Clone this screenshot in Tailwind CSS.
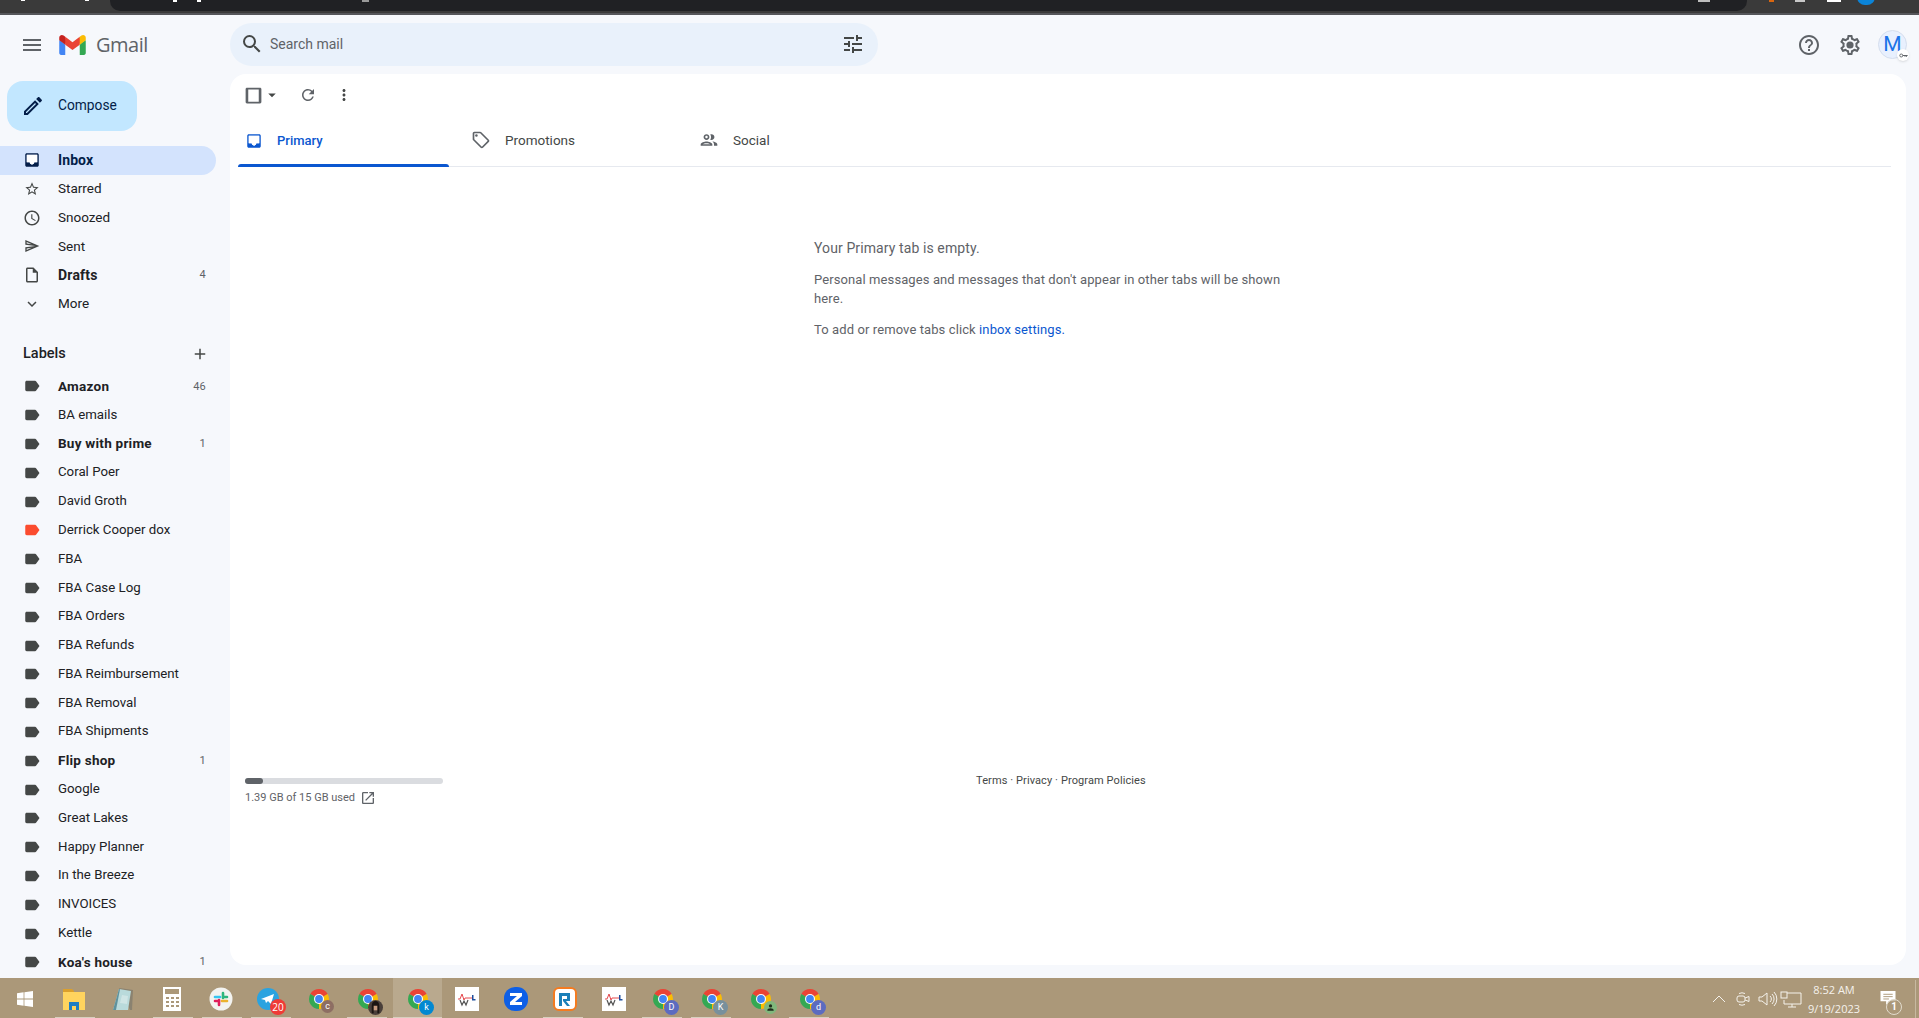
<!DOCTYPE html>
<html lang="en">
  <head>
    <meta charset="UTF-8" />
    <meta name="viewport" content="width=device-width, initial-scale=1.0" />
    <title>Inbox - Gmail</title>
    <script src="https://cdn.jsdelivr.net/npm/@tailwindcss/browser@4"></script>
  </head>
  <body class="bg-[#f6f8fc] h-screen overflow-hidden flex flex-col font-['Roboto',sans-serif] text-[#202124]">
    <svg class="hidden">
      <symbol id="label" viewBox="0 0 24 24"><path d="M17.63 5.84C17.27 5.33 16.67 5 16 5L5 5.01C3.9 5.01 3 5.9 3 7v10c0 1.1.9 1.99 2 1.99L16 19c.67 0 1.27-.33 1.63-.84L22 12l-4.37-6.16z" /></symbol>
      <symbol id="chrome" viewBox="0 0 48 48">
        <path fill="#ea4335" d="M6.68 14A20 20 0 0 1 41.32 14L24 24Z" />
        <path fill="#fbbc04" d="M41.32 14A20 20 0 0 1 24 44L24 24Z" />
        <path fill="#34a853" d="M24 44A20 20 0 0 1 6.68 14L24 24Z" />
        <circle cx="24" cy="24" r="10" fill="#fff" />
        <circle cx="24" cy="24" r="7.8" fill="#4285f4" />
      </symbol>
      <symbol id="inbox" viewBox="0 0 24 24"><path d="M19 3H5c-1.1 0-2 .9-2 2v14c0 1.1.9 2 2 2h14c1.1 0 2-.9 2-2V5c0-1.1-.9-2-2-2zm0 12h-4c0 1.66-1.35 3-3 3s-3-1.34-3-3H5V5h14v10z" /><path fill="#fff" d="M5 5h14v10h-4c0 1.66-1.35 3-3 3s-3-1.34-3-3H5z" /></symbol>
      <symbol id="doc" viewBox="0 0 24 24">
        <path fill="#fff" d="M0 0h24v24H0z" />
        <path fill="none" stroke="#e5484d" stroke-width="1" d="M3 12l2 0 2-5 2 6 1-2h7" />
        <path fill="none" stroke="#555" stroke-width="1.2" d="M5 13l2 5 2-4 2 4 2-5" />
        <path fill="#1f4e9c" d="M17 8h1.5v4h2v1.5H17z" />
      </symbol>
    </svg>

    <!-- browser chrome, cut off at the top of the capture -->
    <div class="relative h-[15px] shrink-0 bg-[#3a3a3a] border-b-2 border-[#55565a] overflow-hidden">
      <div class="ml-[110px] w-[1637px] h-[11px] bg-[#202124] rounded-b-[10px]"></div>
      <span class="absolute top-0 left-[21px] w-[4px] h-[1px] bg-white"></span>
      <span class="absolute top-0 left-[85px] w-[4px] h-[1px] bg-white"></span>
      <span class="absolute top-0 left-[173px] w-[4px] h-[2px] bg-white"></span>
      <span class="absolute top-0 left-[197px] w-[4px] h-[2px] bg-white"></span>
      <span class="absolute top-0 left-[362px] w-[7px] h-[2px] bg-[#9a9a9a]"></span>
      <span class="absolute top-0 left-[1698px] w-[12px] h-[2px] bg-[#bdbdbd]"></span>
      <span class="absolute top-0 left-[1769px] w-[5px] h-[2px] bg-[#d9660f]"></span>
      <span class="absolute top-0 left-[1795px] w-[10px] h-[2px] bg-[#c8c8c8]"></span>
      <span class="absolute top-0 left-[1827px] w-[14px] h-[2px] bg-white"></span>
      <span class="absolute top-[-11px] left-[1857px] w-[18px] h-[16px] rounded-full bg-[#0b84d8]"></span>
    </div>

    <!-- gmail header -->
    <header class="h-[59px] shrink-0 flex items-center">
      <div class="w-[230px] flex items-center shrink-0">
        <svg class="ml-5 w-6 h-6 fill-[#5f6368]" viewBox="0 0 24 24"><path d="M3 18h18v-2H3v2zm0-5h18v-2H3v2zm0-7v2h18V6H3z" /></svg>
        <svg class="ml-[15px] w-[27px] h-[20px]" viewBox="0 0 256 193">
          <path fill="#4285F4" d="M58.182 192.05V93.14L27.507 65.077 0 49.504v125.091c0 9.658 7.825 17.455 17.455 17.455h40.727Z" />
          <path fill="#34A853" d="M197.818 192.05h40.727c9.659 0 17.455-7.826 17.455-17.455V49.505l-31.156 17.837-27.026 25.798v98.91Z" />
          <path fill="#EA4335" d="m58.182 93.14-4.174-38.647 4.174-36.989L128 69.868l69.818-52.364 4.669 34.992-4.669 40.644L128 145.504z" />
          <path fill="#FBBC04" d="M197.818 17.504V93.14L256 49.504V26.231c0-21.585-24.64-33.89-41.89-20.945l-16.292 12.218Z" />
          <path fill="#C5221F" d="M0 49.504l26.759 20.07L58.182 93.14V17.504L41.89 5.286C24.61-7.66 0 4.646 0 26.23v23.273Z" />
        </svg>
        <span class="ml-[10px] text-[20px] leading-none text-[#5f6368] font-['Open_Sans',sans-serif] tracking-[-0.5px]">Gmail</span>
      </div>
      <div class="w-[648px] h-[43px] mb-[1px] rounded-[22px] bg-[#e9f1fb] flex items-center">
        <svg class="ml-[10px] w-6 h-6 fill-[#444746]" viewBox="0 0 24 24"><path d="M15.5 14h-.79l-.28-.27A6.471 6.471 0 0 0 16 9.5 6.5 6.5 0 1 0 9.5 16c1.61 0 3.09-.59 4.23-1.57l.27.28v.79l5 4.99L20.49 19l-4.99-5zm-6 0C7.01 14 5 11.99 5 9.5S7.01 5 9.5 5 14 7.01 14 9.5 11.99 14 9.5 14z" /></svg>
        <span class="ml-[6px] text-sm text-[#5f6368]">Search mail</span>
        <svg class="ml-auto mr-[13px] w-6 h-6 fill-[#444746]" viewBox="0 0 24 24"><path d="M3 17v2h6v-2H3zM3 5v2h10V5H3zm10 16v-2h8v-2h-8v-2h-2v6h2zM7 9v2H3v2h4v2h2V9H7zm14 4v-2H11v2h10zm-6-4h2V7h4V5h-4V3h-2v6z" /></svg>
      </div>
      <div class="ml-auto flex items-center">
        <svg class="w-6 h-6 fill-[#5f6368]" viewBox="0 0 24 24"><path d="M11 18h2v-2h-2v2zm1-16C6.48 2 2 6.48 2 12s4.48 10 10 10 10-4.48 10-10S17.52 2 12 2zm0 18c-4.41 0-8-3.59-8-8s3.59-8 8-8 8 3.59 8 8-3.59 8-8 8zm0-14c-2.21 0-4 1.79-4 4h2c0-1.1.9-2 2-2s2 .9 2 2c0 2-3 1.75-3 5h2c0-2.25 3-2.5 3-5 0-2.21-1.79-4-4-4z" /></svg>
        <svg class="ml-[17px] w-6 h-6 fill-[#5f6368]" viewBox="0 0 24 24"><path d="M19.43 12.98c.04-.32.07-.64.07-.98 0-.34-.03-.66-.07-.98l2.11-1.65c.19-.15.24-.42.12-.64l-2-3.46a.5.5 0 0 0-.61-.22l-2.49 1c-.52-.4-1.08-.73-1.69-.98l-.38-2.65A.488.488 0 0 0 14 2h-4c-.25 0-.46.18-.49.42l-.38 2.65c-.61.25-1.17.59-1.69.98l-2.49-1a.566.566 0 0 0-.18-.03c-.17 0-.34.09-.43.25l-2 3.46c-.13.22-.07.49.12.64l2.11 1.65c-.04.32-.07.65-.07.98 0 .33.03.66.07.98l-2.11 1.65c-.19.15-.24.42-.12.64l2 3.46a.5.5 0 0 0 .61.22l2.49-1c.52.4 1.08.73 1.69.98l.38 2.65c.03.24.24.42.49.42h4c.25 0 .46-.18.49-.42l.38-2.65c.61-.25 1.17-.59 1.69-.98l2.49 1c.06.02.12.03.18.03.17 0 .34-.09.43-.25l2-3.46c.12-.22.07-.49-.12-.64l-2.11-1.65zm-1.98-1.71c.04.31.05.52.05.73 0 .21-.02.43-.05.73l-.14 1.13.89.7 1.08.84-.7 1.21-1.27-.51-1.04-.42-.9.68c-.43.32-.84.56-1.25.73l-1.06.43-.16 1.13-.2 1.35h-1.4l-.19-1.35-.16-1.13-1.06-.43c-.43-.18-.83-.41-1.23-.71l-.91-.7-1.06.43-1.27.51-.7-1.21 1.08-.84.89-.7-.14-1.13c-.03-.31-.05-.54-.05-.74s.02-.43.05-.73l.14-1.13-.89-.7-1.08-.84.7-1.21 1.27.51 1.04.42.9-.68c.43-.32.84-.56 1.25-.73l1.06-.43.16-1.13.2-1.35h1.39l.19 1.35.16 1.13 1.06.43c.43.18.83.41 1.23.71l.91.7 1.06-.43 1.27-.51.7 1.21-1.07.85-.89.7.14 1.13z" /><circle cx="12" cy="12" r="3.6" /></svg>
        <div class="relative ml-[16px] mr-[12px] w-[29px] h-[29px] rounded-full bg-[#e8f0fe] border border-[#d5deee] flex items-center justify-center text-[21px] leading-none text-[#1a73e8]">
          M
          <span class="absolute right-[-3px] bottom-[-3px] w-[12px] h-[12px] rounded-full bg-white shadow-sm flex items-center justify-center">
            <svg class="w-[9px] h-[9px]" viewBox="0 0 12 12"><circle cx="3" cy="6" r="2" fill="none" stroke="#5f6368" stroke-width="1.2" /><path fill="#5f6368" d="M5 5.4h6.5v1.2h-1v1.4h-1V6.6h-1V8h-1V6.6H5z" /></svg>
          </span>
        </div>
      </div>
    </header>

    <div class="flex-1 min-h-0 flex">
      <!-- left nav -->
      <aside class="w-[230px] shrink-0 overflow-hidden pt-[7px] text-sm">
        <button class="ml-[7px] mb-[15px] w-[130px] h-[50px] rounded-2xl bg-[#c2e7ff] flex items-center">
          <svg class="ml-[14px] w-6 h-6 fill-[#041e49]" viewBox="0 0 24 24"><path d="M3 17.25V21h3.75L17.81 9.94l-3.75-3.75L3 17.25zM5.92 19H5v-.92l9.06-9.06.92.92L5.92 19zM20.71 5.63l-2.34-2.34c-.2-.2-.45-.29-.71-.29s-.51.1-.7.29l-1.83 1.83 3.75 3.75 1.83-1.83c.39-.39.39-1.02 0-1.41z" /></svg>
          <span class="ml-[13px] text-[13.75px] text-[#041e49]">Compose</span>
        </button>

        <nav class="flex flex-col">
          <div class="h-[29px] pb-[1px] w-[216px] rounded-r-full bg-[#d3e3fd] flex items-center font-bold tracking-[0.1px] text-[#041e49]">
            <svg class="ml-[23px] w-[18px] h-[18px] fill-[#041e49]"><use href="#inbox" /></svg><span class="ml-[17px]">Inbox</span>
          </div>
          <div class="h-[28.8px] pb-[1px] flex items-center">
            <svg class="ml-[24px] w-4 h-4 fill-[#444746]" viewBox="0 0 24 24"><path d="M22 9.24l-7.19-.62L12 2 9.19 8.63 2 9.24l5.46 4.73L5.82 21 12 17.27 18.18 21l-1.63-7.03L22 9.24zM12 15.4l-3.76 2.27 1-4.28-3.32-2.88 4.38-.38L12 6.1l1.71 4.04 4.38.38-3.32 2.88 1 4.28L12 15.4z" /></svg><span class="ml-[18px] text-[13.5px]">Starred</span>
          </div>
          <div class="h-[28.8px] pb-[1px] flex items-center">
            <svg class="ml-[23px] w-[18px] h-[18px] fill-[#444746]" viewBox="0 0 24 24"><path d="M11.99 2C6.47 2 2 6.48 2 12s4.47 10 9.99 10C17.52 22 22 17.52 22 12S17.52 2 11.99 2zM12 20c-4.42 0-8-3.58-8-8s3.58-8 8-8 8 3.58 8 8-3.58 8-8 8zm.5-13H11v6l5.25 3.15.75-1.23-4.5-2.67z" /></svg><span class="ml-[17px] text-[13.5px]">Snoozed</span>
          </div>
          <div class="h-[28.8px] pb-[1px] flex items-center">
            <svg class="ml-[24px] w-4 h-4 fill-[#444746]" viewBox="0 0 24 24"><path d="M4.01 6.03l7.51 3.22-7.52-1 .01-2.22m7.5 8.72L4 17.97v-2.22l7.51-1M2.01 3L2 10l15 2-15 2 .01 7L23 12 2.01 3z" /></svg><span class="ml-[18px] text-[13.5px]">Sent</span>
          </div>
          <div class="h-[28.8px] pb-[1px] w-[216px] flex items-center font-bold tracking-[0.2px]">
            <svg class="ml-[23px] w-[18px] h-[18px] fill-[#444746]" viewBox="0 0 24 24"><path d="M14 2H6c-1.1 0-1.99.9-1.99 2L4 20c0 1.1.89 2 1.99 2H18c1.1 0 2-.9 2-2V8l-6-6zM6 20V4h7v5h5v11H6z" /></svg><span class="ml-[17px]">Drafts</span><span class="ml-auto mr-[10px] text-[11px] font-normal text-[#5f6368]">4</span>
          </div>
          <div class="h-[28.8px] pb-[1px] flex items-center">
            <svg class="ml-[23px] w-[18px] h-[18px] fill-[#444746]" viewBox="0 0 24 24"><path d="M16.59 8.59L12 13.17 7.41 8.59 6 10l6 6 6-6z" /></svg><span class="ml-[17px] text-[13.5px]">More</span>
          </div>
        </nav>

        <div class="pt-[17px] h-[53.5px] w-[216px] flex items-center justify-between pl-[23px] pr-[7px] font-medium text-[14.5px]">
          <span>Labels</span>
          <svg class="w-[18px] h-[18px] fill-[#444746]" viewBox="0 0 24 24"><path d="M19 13h-6v6h-2v-6H5v-2h6V5h2v6h6v2z" /></svg>
        </div>

        <div class="flex flex-col w-[216px] text-[13.25px]">
          <div class="h-[28.8px] pb-[1px] flex items-center font-bold text-[13.5px] tracking-[0.25px]"><svg class="ml-[23px] w-[18px] h-[18px] fill-[#444746]"><use href="#label" /></svg><span class="ml-[17px]">Amazon</span><span class="ml-auto mr-[10px] text-[11px] font-normal text-[#5f6368]">46</span></div>
          <div class="h-[28.8px] pb-[1px] flex items-center"><svg class="ml-[23px] w-[18px] h-[18px] fill-[#444746]"><use href="#label" /></svg><span class="ml-[17px]">BA emails</span></div>
          <div class="h-[28.8px] pb-[1px] flex items-center font-bold text-[13.5px] tracking-[0.25px]"><svg class="ml-[23px] w-[18px] h-[18px] fill-[#444746]"><use href="#label" /></svg><span class="ml-[17px]">Buy with prime</span><span class="ml-auto mr-[10px] text-[11px] font-normal text-[#5f6368]">1</span></div>
          <div class="h-[28.8px] pb-[1px] flex items-center"><svg class="ml-[23px] w-[18px] h-[18px] fill-[#444746]"><use href="#label" /></svg><span class="ml-[17px]">Coral Poer</span></div>
          <div class="h-[28.8px] pb-[1px] flex items-center"><svg class="ml-[23px] w-[18px] h-[18px] fill-[#444746]"><use href="#label" /></svg><span class="ml-[17px]">David Groth</span></div>
          <div class="h-[28.8px] pb-[1px] flex items-center"><svg class="ml-[23px] w-[18px] h-[18px] fill-[#fb4c2f]"><use href="#label" /></svg><span class="ml-[17px]">Derrick Cooper dox</span></div>
          <div class="h-[28.8px] pb-[1px] flex items-center"><svg class="ml-[23px] w-[18px] h-[18px] fill-[#444746]"><use href="#label" /></svg><span class="ml-[17px]">FBA</span></div>
          <div class="h-[28.8px] pb-[1px] flex items-center"><svg class="ml-[23px] w-[18px] h-[18px] fill-[#444746]"><use href="#label" /></svg><span class="ml-[17px]">FBA Case Log</span></div>
          <div class="h-[28.8px] pb-[1px] flex items-center"><svg class="ml-[23px] w-[18px] h-[18px] fill-[#444746]"><use href="#label" /></svg><span class="ml-[17px]">FBA Orders</span></div>
          <div class="h-[28.8px] pb-[1px] flex items-center"><svg class="ml-[23px] w-[18px] h-[18px] fill-[#444746]"><use href="#label" /></svg><span class="ml-[17px]">FBA Refunds</span></div>
          <div class="h-[28.8px] pb-[1px] flex items-center"><svg class="ml-[23px] w-[18px] h-[18px] fill-[#444746]"><use href="#label" /></svg><span class="ml-[17px]">FBA Reimbursement</span></div>
          <div class="h-[28.8px] pb-[1px] flex items-center"><svg class="ml-[23px] w-[18px] h-[18px] fill-[#444746]"><use href="#label" /></svg><span class="ml-[17px]">FBA Removal</span></div>
          <div class="h-[28.8px] pb-[1px] flex items-center"><svg class="ml-[23px] w-[18px] h-[18px] fill-[#444746]"><use href="#label" /></svg><span class="ml-[17px]">FBA Shipments</span></div>
          <div class="h-[28.8px] pb-[1px] flex items-center font-bold text-[13.5px] tracking-[0.25px]"><svg class="ml-[23px] w-[18px] h-[18px] fill-[#444746]"><use href="#label" /></svg><span class="ml-[17px]">Flip shop</span><span class="ml-auto mr-[10px] text-[11px] font-normal text-[#5f6368]">1</span></div>
          <div class="h-[28.8px] pb-[1px] flex items-center"><svg class="ml-[23px] w-[18px] h-[18px] fill-[#444746]"><use href="#label" /></svg><span class="ml-[17px]">Google</span></div>
          <div class="h-[28.8px] pb-[1px] flex items-center"><svg class="ml-[23px] w-[18px] h-[18px] fill-[#444746]"><use href="#label" /></svg><span class="ml-[17px]">Great Lakes</span></div>
          <div class="h-[28.8px] pb-[1px] flex items-center"><svg class="ml-[23px] w-[18px] h-[18px] fill-[#444746]"><use href="#label" /></svg><span class="ml-[17px]">Happy Planner</span></div>
          <div class="h-[28.8px] pb-[1px] flex items-center"><svg class="ml-[23px] w-[18px] h-[18px] fill-[#444746]"><use href="#label" /></svg><span class="ml-[17px]">In the Breeze</span></div>
          <div class="h-[28.8px] pb-[1px] flex items-center"><svg class="ml-[23px] w-[18px] h-[18px] fill-[#444746]"><use href="#label" /></svg><span class="ml-[17px]">INVOICES</span></div>
          <div class="h-[28.8px] pb-[1px] flex items-center"><svg class="ml-[23px] w-[18px] h-[18px] fill-[#444746]"><use href="#label" /></svg><span class="ml-[17px]">Kettle</span></div>
          <div class="h-[28.8px] pb-[1px] flex items-center font-bold text-[13.5px] tracking-[0.25px]"><svg class="ml-[23px] w-[18px] h-[18px] fill-[#444746]"><use href="#label" /></svg><span class="ml-[17px]">Koa's house</span><span class="ml-auto mr-[10px] text-[11px] font-normal text-[#5f6368]">1</span></div>
        </div>
      </aside>

      <!-- message pane -->
      <main class="flex-1 min-w-0 mr-[13px] mb-[13px] bg-white rounded-2xl flex flex-col">
        <div class="h-[42px] pl-[13px] flex items-center shrink-0">
          <svg class="w-[21px] h-[21px] fill-[#5f6368]" viewBox="0 0 24 24"><path d="M18 5v14H6V5h12m1.5-2h-15C3.7 3 3 3.7 3 4.5v15c0 .8.7 1.5 1.5 1.5h15c.8 0 1.5-.7 1.5-1.5v-15c0-.8-.7-1.5-1.5-1.5z" /></svg>
          <svg class="ml-[-1px] w-[18px] h-[18px] fill-[#444746]" viewBox="0 0 24 24"><path d="M7 10l5 5 5-5z" /></svg>
          <svg class="ml-[18px] w-[18px] h-[18px] fill-[#5f6368]" viewBox="0 0 24 24"><path d="M17.65 6.35A7.958 7.958 0 0 0 12 4c-4.42 0-7.99 3.58-7.99 8s3.57 8 7.99 8c3.73 0 6.84-2.55 7.73-6h-2.08A5.99 5.99 0 0 1 12 18c-3.31 0-6-2.69-6-6s2.69-6 6-6c1.66 0 3.14.69 4.22 1.78L13 11h7V4l-2.35 2.35z" /></svg>
          <svg class="ml-[18px] w-[18px] h-[18px] fill-[#444746]" viewBox="0 0 24 24"><path d="M12 8c1.1 0 2-.9 2-2s-.9-2-2-2-2 .9-2 2 .9 2 2 2zm0 2c-1.1 0-2 .9-2 2s.9 2 2 2 2-.9 2-2-.9-2-2-2zm0 6c-1.1 0-2 .9-2 2s.9 2 2 2 2-.9 2-2-.9-2-2-2z" /></svg>
        </div>

        <div class="ml-2 mr-[15px] h-[51px] border-b border-[#e6e9ef] flex shrink-0 text-[13.5px]">
          <div class="relative w-[227px] pl-[7px] pb-[1px] flex items-center text-[#0b57d0] font-medium">
            <svg class="w-[18px] h-[18px] fill-[#0b57d0]"><use href="#inbox" /></svg>
            <span class="ml-[14px] text-[13px]">Primary</span>
            <span class="absolute left-0 bottom-[-1px] w-[211px] h-[3px] rounded-t-[3px] bg-[#0b57d0]"></span>
          </div>
          <div class="w-[228px] pl-[6px] pb-[2px] flex items-center text-[#444746]">
            <svg class="w-5 h-5 fill-[#5f6368]" viewBox="0 0 24 24"><path d="M21.41 11.58l-9-9C12.05 2.22 11.55 2 11 2H4c-1.1 0-2 .9-2 2v7c0 .55.22 1.05.59 1.42l9 9c.36.36.86.58 1.41.58.55 0 1.05-.22 1.41-.59l7-7c.37-.36.59-.86.59-1.41 0-.55-.23-1.06-.59-1.42zM13 20.01L4 11V4h7v-.01l9 9-7 7.02z" /><circle cx="6.5" cy="6.5" r="1.5" /></svg>
            <span class="ml-[14px]">Promotions</span>
          </div>
          <div class="pl-[6px] pb-[2px] flex items-center text-[#444746]">
            <svg class="w-5 h-5 fill-[#5f6368]" viewBox="0 0 24 24"><path d="M9 13.75c-2.34 0-7 1.17-7 3.5V19h14v-1.75c0-2.33-4.66-3.5-7-3.5zM4.34 17c.84-.58 2.87-1.25 4.66-1.25s3.82.67 4.66 1.25H4.34zM9 12c1.93 0 3.5-1.57 3.5-3.5S10.93 5 9 5 5.5 6.57 5.5 8.5 7.07 12 9 12zm0-5c.83 0 1.5.67 1.5 1.5S9.83 10 9 10s-1.5-.67-1.5-1.5S8.17 7 9 7zm7.04 6.81c1.16.84 1.96 1.96 1.96 3.44V19h4v-1.75c0-2.02-3.5-3.17-5.96-3.44zM15 12c1.93 0 3.5-1.57 3.5-3.5S16.93 5 15 5c-.54 0-1.04.13-1.5.35.63.89 1 1.98 1 3.15s-.37 2.26-1 3.15c.46.22.96.35 1.5.35z" /></svg>
            <span class="ml-[14px]">Social</span>
          </div>
        </div>

        <div class="ml-[584px] mt-[71px] w-[480px] h-[128px] text-[13px] leading-[19px] tracking-[0.1px] text-[#5f6368]">
          <p class="text-sm">Your Primary tab is empty.</p>
          <p class="mt-[12px]">Personal messages and messages that don't appear in other tabs will be shown here.</p>
          <p class="mt-[12px]">To add or remove tabs click <span class="text-[#0b57d0]">inbox settings.</span></p>
        </div>

        <div class="mt-[412px] ml-[15px] flex text-[11px] text-[#5f6368]">
          <div class="w-[198px]">
            <div class="h-[6px] rounded-full bg-[#dadce0]"><div class="h-full w-[18px] rounded-full bg-[#5f6368]"></div></div>
            <div class="mt-[4px] flex items-center h-[20px]">
              <span class="w-[115px] whitespace-nowrap">1.39 GB of 15 GB used</span>
              <svg class="w-[16px] h-[16px] fill-[#5f6368]" viewBox="0 0 24 24"><path d="M19 19H5V5h7V3H5c-1.11 0-2 .9-2 2v14c0 1.1.89 2 2 2h14c1.1 0 2-.9 2-2v-7h-2v7zM14 3v2h3.59l-9.83 9.83 1.41 1.41L19 6.41V10h2V3h-7z" /></svg>
            </div>
          </div>
          <div class="ml-[533px] -mt-[4px] text-[#444746] leading-[14px] tracking-[0.1px]">Terms · Privacy · Program Policies</div>
        </div>
      </main>
    </div>

    <!-- windows taskbar -->
    <footer class="h-[40px] pt-[2px] shrink-0 bg-[#ab9879] flex items-center">
      <div class="w-[49px] h-full flex items-center justify-center">
        <svg class="w-4 h-4 fill-white" viewBox="0 0 16 16"><path d="M0 2.2 6.6 1.3v6.3H0zM7.4 1.2 16 0v7.6H7.4zM0 8.4h6.6v6.3L0 13.8zM7.4 8.4H16V16l-8.6-1.2z" /></svg>
      </div>
      <div class="relative w-[49px] h-full flex items-center justify-center">
        <svg class="w-[22px] h-[22px]" viewBox="0 0 22 22"><path fill="#dba02c" d="M0 1h9l2 2v3H0z" /><path fill="#ffd45e" d="M0 4h22v18H0z" /><path fill="#1f7ec4" d="M6 14h10v8h-3v-4H9v4H6z" /></svg>
        <span class="absolute bottom-0 left-[6px] w-10 h-[1px] bg-[#d8cfbf]"></span>
      </div>
      <div class="w-[49px] h-full flex items-center justify-center">
        <svg class="w-6 h-6" viewBox="0 0 24 24"><path fill="#8a8270" d="M8 1l14 2-1 20-2 0z" /><path fill="#b9dadb" d="M8 2l12 2-3 19H2z" /><path fill="#5f929c" d="M2 23 8 2l1 .2L5 23z" /><path fill="#e6f0ef" d="M11 8l6 1-1 8-7-1z" opacity=".5" /></svg>
      </div>
      <div class="relative w-[49px] h-full flex items-center justify-center">
        <svg class="w-[18px] h-6" viewBox="0 0 18 24"><path fill="#fff" d="M0 0h18v24H0z" /><path fill="#ab9879" d="M2 2h14v5H2zM3 10h3v2H3zM8 10h3v2H8zM13 10h3v2h-3zM3 14h3v2H3zM8 14h3v2H8zM13 14h3v2h-3zM3 18h3v2H3zM8 18h3v2H8zM13 18h3v2h-3z" /></svg>
        <span class="absolute bottom-0 left-[6px] w-10 h-[1px] bg-[#d8cfbf]"></span>
      </div>
      <div class="relative w-[49px] h-full flex items-center justify-center">
        <svg class="w-6 h-6" viewBox="0 0 24 24"><circle cx="12" cy="12" r="11.5" fill="#f3f3f0" /><path stroke-width="2.6" stroke-linecap="round" stroke="#36c5f0" d="M6 10h5" /><path stroke-width="2.6" stroke-linecap="round" stroke="#2eb67d" d="M14 6v5M14 10h4" /><path stroke-width="2.6" stroke-linecap="round" stroke="#ecb22e" d="M13 14h5" /><path stroke-width="2.6" stroke-linecap="round" stroke="#e01e5a" d="M10 13v5M6 14h4" /></svg>
        <span class="absolute bottom-0 left-[6px] w-10 h-[1px] bg-[#d8cfbf]"></span>
      </div>
      <div class="relative w-[49px] h-full flex items-center justify-center">
        <svg class="w-6 h-6 -translate-x-[2px]" viewBox="0 0 24 24"><circle cx="12" cy="12" r="11" fill="#2aa3e0" /><path fill="#fff" d="M5 12 18 7l-3 10-3-3-2 2-1-3z" /></svg>
        <span class="absolute right-[8px] bottom-[3px] w-[16px] h-[16px] rounded-full bg-[#ef3b36] text-white text-[10px] leading-[16px] text-center font-['Open_Sans',sans-serif]">20</span>
        <span class="absolute bottom-0 left-[6px] w-10 h-[1px] bg-[#d8cfbf]"></span>
      </div>
      <div class="relative w-[49px] h-full flex items-center justify-center">
        <svg class="w-6 h-6"><use href="#chrome" /></svg>
        <span class="absolute right-[9px] bottom-[5px] w-[13px] h-[13px] rounded-full bg-[#8d6e63] text-white text-[9px] leading-[13px] text-center">c</span>
      </div>
      <div class="relative w-[49px] h-full flex items-center justify-center">
        <svg class="w-6 h-6"><use href="#chrome" /></svg>
        <svg class="absolute right-[9px] bottom-[3px] w-[15px] h-[15px]" viewBox="0 0 16 16"><circle cx="8" cy="8" r="8" fill="#4a3f3a" /><path fill="#c79a7e" d="M5.5 5h5v6h-5z" /><path fill="#1c1513" d="M4 6c0-3 1.5-5 4-5s4 2 4 5v8H10V6H6v8H4z" /></svg>
        <span class="absolute bottom-0 left-[4px] w-10 h-[1px] bg-[#d8cfbf]"></span>
      </div>
      <div class="relative w-[49px] h-[40px] ml-[1px] -mt-[2px] pt-[2px] bg-[#b9a98e] flex items-center justify-center">
        <svg class="w-6 h-6"><use href="#chrome" /></svg>
        <span class="absolute right-[8px] bottom-[3px] w-[15px] h-[15px] rounded-full bg-[#0288d1] text-white text-[9px] leading-[15px] text-center">k</span>
        <span class="absolute bottom-0 left-0 w-full h-[1px] bg-[#d8cfbf]"></span>
      </div>
      <div class="w-[49px] h-full flex items-center justify-center"><svg class="w-6 h-6"><use href="#doc" /></svg></div>
      <div class="w-[49px] h-full flex items-center justify-center">
        <svg class="w-6 h-6" viewBox="0 0 24 24"><rect width="24" height="24" rx="11" fill="#0d5fe6" /><path fill="#fff" d="M6 6h12v3l-7 6h7v3H6v-3l7-6H6z" /></svg>
      </div>
      <div class="relative w-[49px] h-full flex items-center justify-center">
        <svg class="w-6 h-6" viewBox="0 0 24 24"><rect x="1" y="1" width="22" height="22" rx="5" fill="#fff" stroke="#f47b20" stroke-width="2" /><path fill="#1b7fb8" d="M6 6h11v8h-4l4 5h-3l-4-5v-2h4V9H9v10H6z" /></svg>
        <span class="absolute bottom-0 left-[3px] w-10 h-[1px] bg-[#d8cfbf]"></span>
      </div>
      <div class="w-[49px] h-full flex items-center justify-center"><svg class="w-6 h-6"><use href="#doc" /></svg></div>
      <div class="relative w-[49px] h-full flex items-center justify-center">
        <svg class="w-6 h-6"><use href="#chrome" /></svg>
        <span class="absolute right-[8px] bottom-[3px] w-[15px] h-[15px] rounded-full bg-[#5c6bc0] text-white text-[9px] leading-[15px] text-center">D</span>
        <span class="absolute bottom-0 left-[4px] w-10 h-[1px] bg-[#d8cfbf]"></span>
      </div>
      <div class="relative w-[49px] h-full flex items-center justify-center">
        <svg class="w-6 h-6"><use href="#chrome" /></svg>
        <span class="absolute right-[8px] bottom-[3px] w-[15px] h-[15px] rounded-full bg-[#78909c] text-white text-[9px] leading-[15px] text-center">K</span>
        <span class="absolute bottom-0 left-[4px] w-10 h-[1px] bg-[#d8cfbf]"></span>
      </div>
      <div class="relative w-[49px] h-full flex items-center justify-center">
        <svg class="w-6 h-6"><use href="#chrome" /></svg>
        <svg class="absolute right-[8px] bottom-[4px] w-[13px] h-[13px]" viewBox="0 0 16 16"><circle cx="8" cy="8" r="8" fill="#81b77c" /><circle cx="8" cy="6" r="2" fill="#1f2d1d" /><path fill="#1f2d1d" d="M4 12c0-2 2-3 4-3s4 1 4 3z" /></svg>
      </div>
      <div class="relative w-[49px] h-full flex items-center justify-center">
        <svg class="w-6 h-6"><use href="#chrome" /></svg>
        <span class="absolute right-[8px] bottom-[3px] w-[15px] h-[15px] rounded-full bg-[#5c6bc0] text-white text-[9px] leading-[15px] text-center">d</span>
        <span class="absolute bottom-0 left-[4px] w-10 h-[1px] bg-[#d8cfbf]"></span>
      </div>

      <!-- system tray -->
      <div class="ml-auto flex items-center h-full text-[#f5f2ec]">
        <svg class="w-6 h-6" fill="none" stroke="currentColor" stroke-width="1" viewBox="0 0 24 24"><path d="M6 15l6-6 6 6" /></svg>
        <svg class="w-6 h-6" fill="none" stroke="currentColor" stroke-width="1" viewBox="0 0 24 24"><path d="M8 6.5a7 7 0 0 1 6 0M8 17.5a7 7 0 0 0 6 0" /><rect x="6" y="9" width="8" height="6" rx="2" /><path d="M14 11l4-1.5v5L14 13" /></svg>
        <svg class="w-6 h-6" fill="none" stroke="currentColor" stroke-width="1" viewBox="0 0 24 24"><path d="M4 10h3l5-4v12l-5-4H4z" /><path d="M15 9a4 4 0 0 1 0 6M17 7a7 7 0 0 1 0 10M19 5a10 10 0 0 1 0 14" /></svg>
        <svg class="w-6 h-6" fill="none" stroke="currentColor" stroke-width="1" viewBox="0 0 24 24"><path d="M8 6h14v11H5v-4M13 17v3M9 20h8" /><rect x="2" y="5" width="6" height="6" /></svg>
        <div class="w-[62px] text-center text-[11px] leading-[19px] font-['Open_Sans',sans-serif]">
          <p>8:52 AM</p>
          <p>9/19/2023</p>
        </div>
        <div class="relative w-[46px] h-full flex items-center justify-center">
          <svg class="w-4 h-[15px] -translate-y-[1px] fill-white" viewBox="0 0 16 16"><path d="M0 0h16v11H9l-3 4v-4H0z" /><path stroke="#ab9879" stroke-width="1" d="M3 3.5h10M3 6h10M3 8.5h6" /></svg>
          <span class="absolute left-[21px] bottom-[3px] w-[16px] h-[16px] rounded-full border border-[#e2dccf] bg-[#ab9879]/70 text-white text-[10px] leading-[14px] text-center font-bold">1</span>
        </div>
        <div class="ml-[4px] w-[4px] h-full border-l border-[#c7b9a1]"></div>
      </div>
    </footer>
  </body>
</html>
